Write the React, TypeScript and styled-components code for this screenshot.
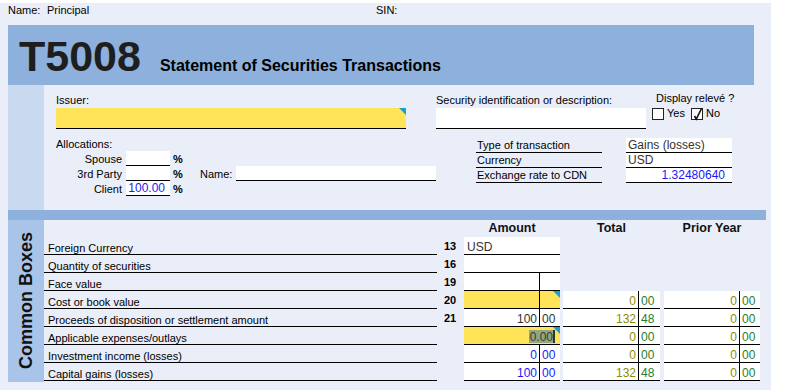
import styled, { createGlobalStyle, css } from 'styled-components';

const GlobalStyle = createGlobalStyle`
  html, body {
    margin: 0;
    padding: 0;
    background: #fff;
  }
  body {
    font-family: "Liberation Sans", Arial, sans-serif;
    font-size: 11px;
    color: #000;
  }
  * {
    box-sizing: border-box;
  }
`;

const Page = styled.div`
  width: 771px;
  height: 387px;
  margin-top: 3px;
  padding-left: 8px;
  background: #eaeef8;
`;

const TopLine = styled.div`
  display: flex;
  height: 22px;
  padding-top: 1px;
  line-height: 13px;
  .key {
    width: 39px;
  }
  .name {
    width: 329px;
  }
`;

const TitleBand = styled.header`
  width: 746px;
  height: 60px;
  background: #8db0dc;
  display: flex;
  align-items: baseline;
  padding: 10px 0 0 11px;
`;

const FormCode = styled.h1`
  margin: 0;
  font-size: 43px;
  line-height: 42px;
  font-weight: bold;
  color: #1e1e1e;
`;

const FormTitle = styled.h2`
  margin: 0 0 0 19px;
  font-size: 16px;
  font-weight: bold;
  color: #000;
`;

const Section = styled.section<{ $h: number }>`
  display: flex;
  height: ${(p) => p.$h}px;
`;

const SideStrip = styled.div<{ $tone: string }>`
  width: 36px;
  flex: none;
  background: ${(p) => p.$tone};
  display: flex;
  align-items: center;
  justify-content: center;
`;

const StripTitle = styled.span`
  writing-mode: vertical-rl;
  transform: rotate(180deg);
  font-size: 18px;
  font-weight: bold;
  color: #111;
  white-space: nowrap;
`;

const UpperBody = styled.div`
  flex: 1;
  padding: 9px 0 0 12px;
  display: flex;
  flex-direction: column;
`;

const FieldRow = styled.div<{ $mt?: number }>`
  display: flex;
  align-items: flex-start;
  margin-top: ${(p) => p.$mt ?? 0}px;
`;

const Block = styled.div<{ $w?: number; $ml?: number; $mt?: number }>`
  width: ${(p) => (p.$w ? `${p.$w}px` : 'auto')};
  margin-left: ${(p) => p.$ml ?? 0}px;
  margin-top: ${(p) => p.$mt ?? 0}px;
`;

const Caption = styled.div`
  line-height: 13px;
`;

const flag = css`
  &::after {
    content: '';
    position: absolute;
    top: 0;
    right: 0;
    border-style: solid;
    border-width: 0 7px 7px 0;
    border-color: transparent #1e9ecf transparent transparent;
  }
`;

const TextField = styled.div<{ $fill?: string; $flag?: boolean }>`
  position: relative;
  margin-top: 1px;
  height: 21px;
  background: ${(p) => p.$fill ?? '#fff'};
  border-bottom: 1px solid #000;
  ${(p) => p.$flag && flag}
`;

const DisplayTitle = styled.div`
  line-height: 13px;
  padding-left: 4px;
`;

const CheckLine = styled.div`
  display: flex;
  align-items: center;
  margin-top: 2px;
  line-height: 13px;
  font-size: 11px;
`;

const Box = styled.span<{ $ml?: number }>`
  width: 12px;
  height: 12px;
  border: 1px solid #222;
  background: #fff;
  margin-left: ${(p) => p.$ml ?? 0}px;
  margin-right: 3px;
  display: inline-flex;
  position: relative;
  svg {
    position: absolute;
    left: 0;
    top: -2px;
  }
`;

const AllocGrid = styled.div`
  display: grid;
  grid-template-columns: 70px 44px 30px 36px 200px;
  grid-auto-rows: 15px;
`;

const AllocLabel = styled.div`
  text-align: right;
  padding: 2px 4px 0 0;
  line-height: 13px;
`;

const Cell = styled.div`
  padding-top: 2px;
  line-height: 13px;
`;

const Pct = styled(Cell)`
  padding-left: 3px;
  font-weight: bold;
`;

const LineInput = styled.div<{ $color?: string }>`
  background: #fff;
  border-bottom: 1px solid #000;
  color: ${(p) => p.$color ?? '#333'};
  font-size: 12px;
  line-height: 14px;
  text-align: right;
  padding-right: 5px;
`;

const TypeGrid = styled.div`
  display: grid;
  grid-template-columns: 126px 106px;
  column-gap: 24px;
  grid-auto-rows: 15px;
`;

const TypeLabel = styled.div`
  border-bottom: 1px solid #000;
  line-height: 15px;
  padding-left: 1px;
`;

const TypeValue = styled.div<{ $align?: string; $color?: string }>`
  background: #fff;
  border-bottom: 1px solid #000;
  font-size: 12px;
  line-height: 15px;
  text-align: ${(p) => p.$align ?? 'left'};
  color: ${(p) => p.$color ?? '#333'};
  padding: 0 7px 0 2px;
`;

const Divider = styled.div`
  width: 758px;
  height: 10px;
  background: #8db0dc;
`;

const LowerBody = styled.div`
  flex: 1;
  display: flex;
  flex-direction: column;
`;

const HeadRow = styled.div`
  display: flex;
  height: 17px;
  font-size: 12.5px;
  font-weight: bold;
  line-height: 17px;
  color: #111;
`;

const HeadCell = styled.div<{ $w: number; $ml?: number }>`
  width: ${(p) => p.$w}px;
  margin-left: ${(p) => p.$ml ?? 0}px;
  text-align: center;
`;

const Row = styled.div`
  display: flex;
  height: 18px;
`;

const RowLabel = styled.div`
  width: 393px;
  border-bottom: 1px solid #000;
  padding: 5px 0 0 4px;
  line-height: 12px;
`;

const BoxNo = styled.div`
  width: 27px;
  padding: 3px 0 0 7px;
  font-weight: bold;
  line-height: 12px;
`;

const MoneyBox = styled.div<{ $w: number; $ml?: number; $fill?: string; $flag?: boolean; $color?: string }>`
  position: relative;
  display: flex;
  width: ${(p) => p.$w}px;
  margin-left: ${(p) => p.$ml ?? 0}px;
  height: 18px;
  background: ${(p) => p.$fill ?? '#fff'};
  border-bottom: 1px solid #000;
  font-size: 12px;
  line-height: 12px;
  color: ${(p) => p.$color ?? '#333'};
  ${(p) => p.$flag && flag}
`;

const Whole = styled.span<{ $color?: string }>`
  width: 75px;
  flex: none;
  text-align: right;
  padding: 4px 2px 0 0;
  color: ${(p) => p.$color ?? 'inherit'};
`;

const Cents = styled.span<{ $color?: string }>`
  flex: 1;
  border-left: 1px solid #000;
  padding: 4px 0 0 2px;
  color: ${(p) => p.$color ?? 'inherit'};
`;

const Plain = styled.span`
  padding: 4px 0 0 3px;
`;

const Editing = styled.span`
  margin: 3px 5px 0 auto;
  height: 13px;
  padding: 1px 0 0 1px;
  background: #93a67c;
  color: #3a3a3a;
  border-right: 2px solid #333;
`;

type Money = [string, string];

type Amount =
  | { kind: 'text'; text: string }
  | { kind: 'empty' }
  | { kind: 'money'; value?: Money; fill?: string; flag?: boolean; color?: string }
  | { kind: 'edit'; text: string };

interface Line {
  label: string;
  box?: string;
  amount: Amount;
  total?: Money;
  prior?: Money;
}

const YELLOW = '#ffe45a';
const BLUE = '#1a1af5';
const OLIVE = '#8f8c00';
const GREEN = '#2a7d2a';

const lines: Line[] = [
  { label: 'Foreign Currency', box: '13', amount: { kind: 'text', text: 'USD' } },
  { label: 'Quantity of securities', box: '16', amount: { kind: 'empty' } },
  { label: 'Face value', box: '19', amount: { kind: 'money' } },
  {
    label: 'Cost or book value',
    box: '20',
    amount: { kind: 'money', fill: YELLOW, flag: true },
    total: ['0', '00'],
    prior: ['0', '00'],
  },
  {
    label: 'Proceeds of disposition or settlement amount',
    box: '21',
    amount: { kind: 'money', value: ['100', '00'] },
    total: ['132', '48'],
    prior: ['0', '00'],
  },
  {
    label: 'Applicable expenses/outlays',
    amount: { kind: 'edit', text: '0.00' },
    total: ['0', '00'],
    prior: ['0', '00'],
  },
  {
    label: 'Investment income (losses)',
    amount: { kind: 'money', value: ['0', '00'], color: BLUE },
    total: ['0', '00'],
    prior: ['0', '00'],
  },
  {
    label: 'Capital gains (losses)',
    amount: { kind: 'money', value: ['100', '00'], color: BLUE },
    total: ['132', '48'],
    prior: ['0', '00'],
  },
];

function AmountCell({ amount }: { amount: Amount }) {
  if (amount.kind === 'text') {
    return (
      <MoneyBox $w={96}>
        <Plain>{amount.text}</Plain>
      </MoneyBox>
    );
  }
  if (amount.kind === 'empty') return <MoneyBox $w={96} />;
  if (amount.kind === 'edit') {
    return (
      <MoneyBox $w={96} $fill={YELLOW} $flag>
        <Editing>{amount.text}</Editing>
      </MoneyBox>
    );
  }
  return (
    <MoneyBox $w={96} $fill={amount.fill} $flag={amount.flag} $color={amount.color}>
      <Whole>{amount.value?.[0]}</Whole>
      <Cents>{amount.value?.[1]}</Cents>
    </MoneyBox>
  );
}

function TotalCell({ value, w, ml }: { value: Money; w: number; ml: number }) {
  return (
    <MoneyBox $w={w} $ml={ml}>
      <Whole $color={OLIVE}>{value[0]}</Whole>
      <Cents $color={GREEN}>{value[1]}</Cents>
    </MoneyBox>
  );
}

export default function App() {
  return (
    <>
      <GlobalStyle />
      <Page>
        <TopLine>
          <span className="key">Name:</span>
          <span className="name">Principal</span>
          <span>SIN:</span>
        </TopLine>

        <TitleBand>
          <FormCode>T5008</FormCode>
          <FormTitle>Statement of Securities Transactions</FormTitle>
        </TitleBand>

        <Section $h={125}>
          <SideStrip $tone="#c9d9ef" />
          <UpperBody>
            <FieldRow>
              <Block $w={350}>
                <Caption>Issuer:</Caption>
                <TextField $fill={YELLOW} $flag />
              </Block>
              <Block $w={210} $ml={30}>
                <Caption>Security identification or description:</Caption>
                <TextField />
              </Block>
              <Block $ml={6} $mt={-2}>
                <DisplayTitle>Display relevé ?</DisplayTitle>
                <CheckLine>
                  <Box />
                  Yes
                  <Box $ml={6}>
                    <svg width="12" height="14" viewBox="0 0 12 14">
                      <path d="M2.5 9 L4.3 12 L9.5 1.5" fill="none" stroke="#111" strokeWidth="1.6" />
                    </svg>
                  </Box>
                  No
                </CheckLine>
              </Block>
            </FieldRow>

            <FieldRow $mt={9}>
              <Block $w={380}>
                <Caption>Allocations:</Caption>
                <AllocGrid>
                  <AllocLabel>Spouse</AllocLabel>
                  <LineInput />
                  <Pct>%</Pct>
                  <span />
                  <span />
                  <AllocLabel>3rd Party</AllocLabel>
                  <LineInput />
                  <Pct>%</Pct>
                  <Cell>Name:</Cell>
                  <LineInput />
                  <AllocLabel>Client</AllocLabel>
                  <LineInput $color={BLUE}>100.00</LineInput>
                  <Pct>%</Pct>
                </AllocGrid>
              </Block>
              <Block $ml={40}>
                <TypeGrid>
                  <TypeLabel>Type of transaction</TypeLabel>
                  <TypeValue>Gains (losses)</TypeValue>
                  <TypeLabel>Currency</TypeLabel>
                  <TypeValue>USD</TypeValue>
                  <TypeLabel>Exchange rate to CDN</TypeLabel>
                  <TypeValue $align="right" $color={BLUE}>
                    1.32480640
                  </TypeValue>
                </TypeGrid>
              </Block>
            </FieldRow>
          </UpperBody>
        </Section>

        <Divider />

        <Section $h={162}>
          <SideStrip $tone="#a9c4e9">
            <StripTitle>Common Boxes</StripTitle>
          </SideStrip>
          <LowerBody>
            <HeadRow>
              <HeadCell $w={96} $ml={420}>
                Amount
              </HeadCell>
              <HeadCell $w={97} $ml={3}>
                Total
              </HeadCell>
              <HeadCell $w={96} $ml={4}>
                Prior Year
              </HeadCell>
            </HeadRow>
            {lines.map((line) => (
              <Row key={line.label}>
                <RowLabel>{line.label}</RowLabel>
                <BoxNo>{line.box}</BoxNo>
                <AmountCell amount={line.amount} />
                {line.total && <TotalCell value={line.total} w={97} ml={3} />}
                {line.prior && <TotalCell value={line.prior} w={96} ml={4} />}
              </Row>
            ))}
          </LowerBody>
        </Section>
      </Page>
    </>
  );
}
